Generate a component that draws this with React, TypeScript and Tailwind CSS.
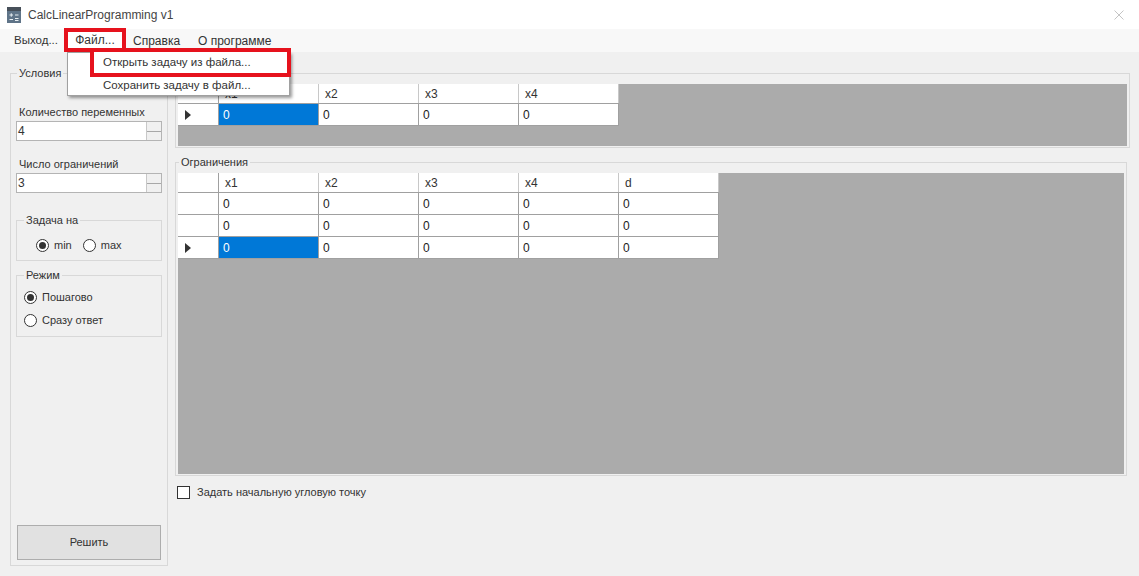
const font = "[font-family:'Liberation_Sans',Arial,sans-serif]";

function Legend({ children, className = "ml-[7px]" }: { children: React.ReactNode; className?: string }) {
  return <legend className={`px-[2px] text-[11px] leading-[14px] text-[#333] ${className}`}>{children}</legend>;
}

function Spinner({ value }: { value: string }) {
  return (
    <div className="flex h-[20px] w-[146px] items-stretch justify-between border border-[#b4b4b4] bg-white text-[12px] leading-[18px] text-[#333]">
      <span className="pl-[1px]">{value}</span>
      <div className="flex w-[15px] flex-col border-l border-[#c8c8c8] bg-[#f0f0f0]">
        <div className="flex-1 border-b border-[#a8a8a8]" />
        <div className="flex-1" />
      </div>
    </div>
  );
}

function Radio({ label, checked }: { label: string; checked?: boolean }) {
  return (
    <div className="flex items-center gap-[5px] text-[11px] leading-[14px] text-[#333]">
      <span className="flex h-[13px] w-[13px] items-center justify-center rounded-full border border-[#333] bg-white">
        {checked && <span className="h-[7px] w-[7px] rounded-full bg-[#333]" />}
      </span>
      {label}
    </div>
  );
}

function DataGrid({ cols, rows, active, className }: { cols: string[]; rows: number; active: number; className: string }) {
  return (
    <div className={`bg-[#ababab] ${className}`}>
      <div className="flex h-[20px] w-fit border-b border-[#a0a0a0] bg-white text-[12px] leading-[20px] text-[#333]">
        <div className="w-[41px] border-r border-[#a0a0a0]" />
        {cols.map((c) => (
          <div key={c} className="w-[100px] border-r border-[#c8c8c8] pl-[6px]">{c}</div>
        ))}
      </div>
      {Array.from({ length: rows }).map((_, r) => (
        <div key={r} className="flex h-[22px] w-fit border-b border-[#a0a0a0] bg-white text-[12px] leading-[22px] text-[#222]">
          <div className="flex w-[41px] items-center border-r border-[#a0a0a0] pl-[7px]">
            {r === active && <span className="h-0 w-0 border-y-[5px] border-l-[6px] border-y-transparent border-l-[#333]" />}
          </div>
          {cols.map((c, i) => (
            <div key={c} className={`w-[100px] border-r border-[#a0a0a0] pl-[4px] ${r === active && i === 0 ? "bg-[#0078d7] text-white" : ""}`}>0</div>
          ))}
        </div>
      ))}
    </div>
  );
}

export default function App() {
  return (
    <div className={`relative flex h-[576px] w-[1139px] flex-col overflow-hidden bg-[#f0f0f0] ${font}`}>
      {/* title bar */}
      <div className="flex h-[29px] items-center justify-between bg-white pl-[7px] pr-[15px]">
        <div className="flex items-center gap-[7px] text-[12px] text-[#444]">
          <svg width="14" height="16" viewBox="0 0 14 16">
            <rect width="14" height="16" fill="#5f7488" />
            <rect width="14" height="4" fill="#47505a" />
            <path d="M2.5 8h3.5M4.25 6.25v3.5M8 8h3.5M2.5 12.5h3.5M8 11.5h3.5M8 13.5h3.5" stroke="#e8eef2" strokeWidth="1" />
          </svg>
          CalcLinearProgramming v1
        </div>
        <svg width="10" height="10" viewBox="0 0 10 10">
          <path d="M0.5 0.5l9 9M9.5 0.5l-9 9" stroke="#c4c4c4" strokeWidth="1" />
        </svg>
      </div>

      {/* menu */}
      <div className="flex h-[23px] items-center bg-[#f8f8f8] pl-[14px] text-[12px] text-[#333]">
        <span className="w-[50px] text-[11.5px]">Выход...</span>
        <span className="mt-[-1px] flex h-[24px] w-[62px] items-center justify-center border-[4px] border-[#e6121d] bg-white">Файл...</span>
        <span className="ml-[7px] w-[65px]">Справка</span>
        <span>О программе</span>
      </div>

      {/* body */}
      <div className="flex flex-1 gap-[7px] pl-[10px] pt-[14px]">
        <fieldset className="flex h-[500px] w-[158px] flex-col border border-[#d8d8d8] px-[5px] pb-[5px]">
          <Legend className="ml-[1px]">Условия</Legend>
          <div className="mt-[25px] text-[11px] leading-[14px] text-[#333]">
            <div className="pl-[3px]">Количество переменных</div>
            <div className="mt-[2px]"><Spinner value="4" /></div>
            <div className="mt-[16px] pl-[3px]">Число ограничений</div>
            <div className="mt-[2px]"><Spinner value="3" /></div>
          </div>
          <fieldset className="mt-[20px] h-[48px] border border-[#d8d8d8]">
            <Legend>Задача на</Legend>
            <div className="flex gap-[11px] pl-[19px] pt-[11px]">
              <Radio label="min" checked />
              <Radio label="max" />
            </div>
          </fieldset>
          <fieldset className="mt-[7px] h-[69px] border border-[#d8d8d8]">
            <Legend>Режим</Legend>
            <div className="flex flex-col gap-[9px] pl-[7px] pt-[8px]">
              <Radio label="Пошагово" checked />
              <Radio label="Сразу ответ" />
            </div>
          </fieldset>
          <button className="mx-[1px] mt-auto flex h-[35px] w-[144px] items-center justify-center border border-[#adadad] bg-[#e1e1e1] text-[11px] text-[#333]">
            Решить
          </button>
        </fieldset>

        <div className="flex flex-col">
          <fieldset className="h-[82px] w-[955px] border border-[#d8d8d8] px-[2px] pt-[4px]">
            <Legend className="ml-[1px]">Целевая функция</Legend>
            <DataGrid className="h-[62px]" cols={["x1", "x2", "x3", "x4"]} rows={1} active={0} />
          </fieldset>
          <fieldset className="mt-[7px] h-[321px] w-[952px] border border-[#d8d8d8] px-[2px] pt-[4px]">
            <Legend className="ml-[1px]">Ограничения</Legend>
            <DataGrid className="h-[301px]" cols={["x1", "x2", "x3", "x4", "d"]} rows={3} active={2} />
          </fieldset>
          <div className="mt-[9px] flex items-center gap-[7px] pl-[2px] text-[11px] leading-[14px] text-[#333]">
            <span className="h-[13px] w-[13px] border border-[#333] bg-white" />
            Задать начальную угловую точку
          </div>
        </div>
      </div>

      {/* open menu */}
      <div className="absolute left-[67px] top-[52px] h-[44px] w-[223px] border border-[#a0a0a0] bg-white text-[11.5px] text-[#333] shadow-[2px_2px_3px_rgba(0,0,0,0.4)]">
        <div className="ml-[22px] mt-[-5px] flex h-[29px] w-[201px] items-center border-[4px] border-[#e6121d] bg-white pl-[9px]">
          Открыть задачу из файла...
        </div>
        <div className="pl-[35px] leading-[16px]">Сохранить задачу в файл...</div>
      </div>
    </div>
  );
}
